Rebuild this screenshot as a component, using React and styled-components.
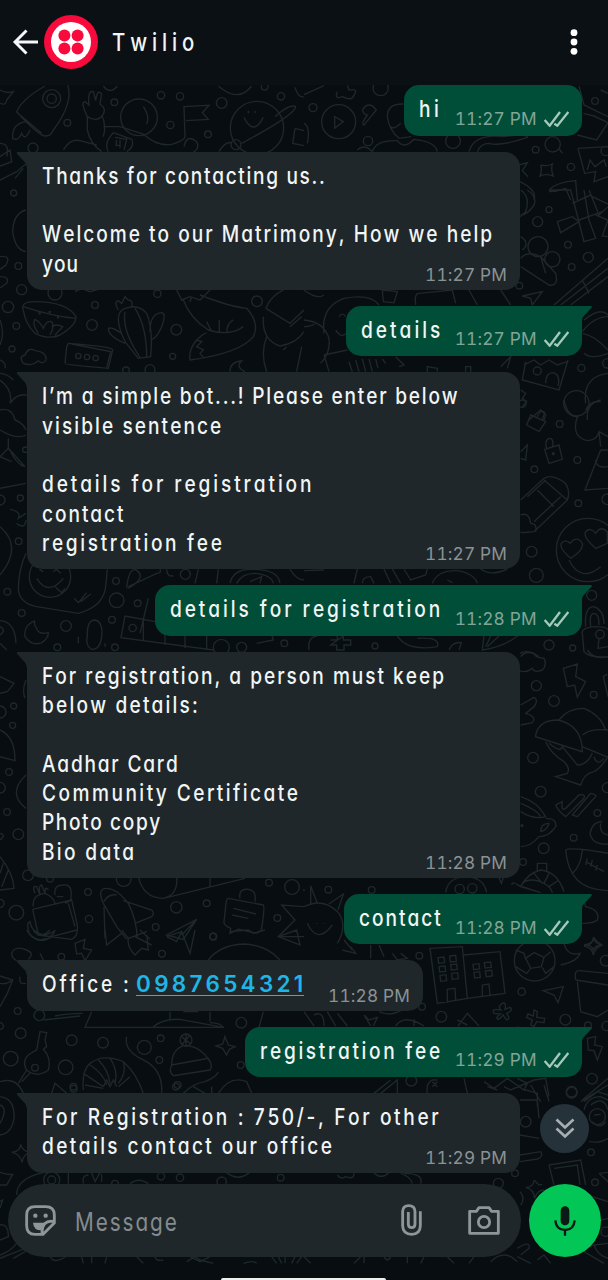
import React from "react";
import styled, { createGlobalStyle, css } from "styled-components";

const GlobalStyle = createGlobalStyle`
  * { box-sizing: border-box; }
  body {
    margin: 0;
    background: #070d10;
    color: #f1f5f5;
    font-family: Inter, "Liberation Sans", sans-serif;
  }
`;

const Screen = styled.main`
  position: relative;
  display: flex;
  flex-direction: column;
  width: 608px;
  height: 1280px;
  overflow: hidden;
  background: #070d10;
`;

const Header = styled.header`
  position: relative;
  display: flex;
  align-items: center;
  flex: none;
  height: 85px;
  padding: 0 30px 1px 12px;
  background: #0a1014;
`;

const BackIcon = styled.svg`
  width: 27px;
  height: 26px;
`;

const Avatar = styled.svg`
  width: 54px;
  height: 54px;
  margin-left: 5px;
`;

const Title = styled.h1`
  flex: 1;
  margin: 0 0 0 14px;
  font-size: 24.5px;
  line-height: 30px;
  font-weight: 450;
  letter-spacing: 5.9px;
  white-space: pre;
  font-feature-settings: "cv11" 1;
  font-kerning: none;
  transform: scaleX(0.83);
  transform-origin: left;
`;

const MenuIcon = styled.svg`
  flex: none;
  width: 8px;
  height: 28px;
  margin-right: 0.5px;
`;

const Wallpaper = styled.svg`
  position: absolute;
  left: 0;
  top: 0;
  width: 608px;
  height: 1264px;
`;

const Conversation = styled.section`
  position: relative;
  display: flex;
  flex-direction: column;
  flex: none;
  gap: 16.05px;
  height: 1088px;
  padding: 0.2px 26.3px 0 26.5px;
`;

const Bubble = styled.article`
  position: relative;
  display: grid;
  grid-template-columns: minmax(0, 1fr);
  flex: none;
  width: ${(p) => p.$width}px;
  padding: 10px 13px 11px 15px;
  border-radius: 15px;
  ${(p) =>
    p.$out
      ? css`
          align-self: flex-end;
          background: #014e38;
          ${p.$tail && "border-top-right-radius: 0;"}
        `
      : css`
          align-self: flex-start;
          background: #1f272a;
          border-top-left-radius: 0;
        `}
`;

const Tail = styled.svg`
  position: absolute;
  top: 0;
  width: 11.5px;
  height: 15px;
  fill: ${(p) => (p.$out ? "#014e38" : "#1f272a")};
  ${(p) => (p.$out ? "right: -10.5px;" : "left: -10.5px; transform: scaleX(-1);")}
`;

const Body = styled.div`
  grid-area: 1 / 1;
`;

const TextRow = styled.div`
  display: flex;
  height: 29.33px;
`;

const Line = styled.span`
  display: block;
  width: ${(p) => (p.$width ? `${p.$width}px` : "auto")};
  font-size: 23px;
  font-weight: 500;
  line-height: 29.33px;
  letter-spacing: ${(p) => p.$tracking}px;
  white-space: pre;
  font-feature-settings: "cv11" 1;
  font-kerning: none;
  transform: scaleX(0.83);
  transform-origin: left;
`;

const PhoneLink = styled.a`
  color: #1fb5e6;
  font-size: 22.5px;
  font-weight: 600;
  line-height: 27px;
  letter-spacing: 3.3px;
  width: 168px;
  height: 26px;
  border-bottom: 1.5px solid #1fb5e6;
  text-decoration: none;
  white-space: nowrap;
`;

const Meta = styled.div`
  grid-area: 1 / 1;
  place-self: end;
  display: flex;
  align-items: center;
  gap: 7px;
  height: 20px;
  margin-bottom: ${(p) => (p.$out ? -4.2 : -5.8)}px;
  color: ${(p) => (p.$out ? "#83a598" : "#8b9294")};
`;

const Time = styled.time`
  font-size: 17.3px;
  line-height: 20px;
  letter-spacing: 0.15px;
  white-space: nowrap;
  font-feature-settings: "tnum" 1;
`;

const Ticks = styled.svg`
  width: 25px;
  height: 16px;
`;

const ScrollButton = styled.button`
  position: absolute;
  right: 19px;
  bottom: 20.5px;
  display: grid;
  place-items: center;
  width: 49px;
  height: 49px;
  padding: 0;
  border: 0;
  border-radius: 50%;
  background: #26323a;
`;

const Composer = styled.footer`
  position: relative;
  display: flex;
  gap: 8px;
  flex: none;
  margin-top: 11px;
  padding: 0 7px 0 8px;
`;

const InputBar = styled.div`
  display: flex;
  align-items: center;
  width: 513px;
  height: 72.5px;
  padding: 0 21px 0 17px;
  border-radius: 37px;
  background: #1f272a;
`;

const Placeholder = styled.span`
  flex: 1;
  margin-left: 19px;
  color: #858c8f;
  font-size: 25px;
  line-height: 32px;
  letter-spacing: 2.3px;
  font-feature-settings: "cv11" 1;
  transform: scaleX(0.83) translateY(1.5px);
  transform-origin: left;
`;

const BarIcon = styled.svg`
  flex: none;
  width: ${(p) => p.$w}px;
  height: ${(p) => p.$h}px;
  margin-left: ${(p) => p.$gap || 0}px;
  fill: none;
  stroke: #8f9698;
  stroke-width: 8.5;
`;

const MicButton = styled.button`
  display: grid;
  place-items: center;
  width: 72px;
  height: 73px;
  padding: 0;
  border: 0;
  border-radius: 50%;
  background: #02c655;
`;

const HomeBar = styled.div`
  position: absolute;
  left: 221px;
  bottom: 0;
  width: 165px;
  height: 2px;
  border-radius: 2px 2px 0 0;
  background: #eef0f0;
`;

/* Doodles, in panels drawn at three times the screen size. */
const doodles = [
  {
    at: [0, 0],
    dots: [[155, 296, 27], [155, 296, 14], [202, 368, 10], [99, 444, 15], [343, 307, 10], [483, 286, 11], [540, 289, 11], [511, 375, 11], [624, 403, 10], [665, 309, 16], [794, 260, 10], [843, 289, 11], [417, 352, 55], [771, 384, 80], [708, 434, 15]],
    d: "M135 258C105 275 65 300 50 335Q90 380 125 405Q150 415 160 390Q205 330 207 285Q207 265 203 255M60 345L125 400M80 365Q35 370 38 415Q55 425 65 400Q75 425 90 390M0 270Q20 282 40 275L20 300Q18 318 0 310M262 350Q240 305 255 305L267 315Q262 270 280 275L287 302Q292 265 305 282L300 312Q325 330 302 352Q285 365 262 350V390Q270 430 305 455M305 345Q320 375 310 410M310 380H360L430 402Q470 440 515 433Q555 420 555 410L552 320L627 316L607 338L625 358L558 362M340 398Q310 430 325 455M340 398L395 418Q405 440 380 455M190 450Q210 415 240 422L290 435M552 440Q560 400 590 425Q600 445 580 457M430 320Q450 350 440 372M825 350Q870 310 887 320Q885 345 725 430M657 455Q675 425 695 428M745 332V340M765 332V340M732 352Q760 410 790 352M655 258Q715 310 755 258M310 258Q330 285 352 258M345 412L380 418L372 450M350 420L348 436H362M360 420V445M885 385L912 392M885 385L878 430L912 437M885 262Q895 295 912 290M0 430Q30 430 20 470",
  },
  {
    at: [304, 0],
    dots: [[104, 365, 51], [27, 323, 12], [230, 264, 23], [447, 423, 22], [746, 433, 23], [695, 449, 10], [801, 501, 11], [873, 303, 10], [192, 423, 14], [905, 453, 14]],
    d: "M92 350V384L118 365ZM0 284L60 257M100 275Q90 300 115 290Q145 305 150 285Q165 265 135 270L130 256M175 330Q195 300 217 330L180 375Q170 372 190 345Q180 345 175 330M298 312Q250 310 250 350Q255 390 285 415L322 410M260 380Q270 390 290 370M205 455Q215 420 280 422Q300 450 330 418Q395 425 400 455M160 450Q180 430 205 455M0 370Q20 380 10 430M495 455Q510 400 600 410Q670 400 670 412Q590 440 555 430Q530 430 520 455M825 258L840 315L912 350M838 340L870 348L912 368L878 420L820 405M822 445L912 440M822 445L842 520L875 515L870 545L912 530M850 510L858 480L873 500L900 480L907 500M890 270L912 280M710 495Q730 500 745 492Q740 510 748 528Q725 520 708 528Q715 510 710 495M765 445L775 460M645 495L670 488L655 512L672 530M648 545Q700 570 690 600M735 570Q760 545 815 542L820 600M735 575Q760 575 785 565L800 600",
  },
  {
    at: [0, 150],
    dots: [[41, 129, 9], [55, 348, 10], [65, 419, 15], [24, 471, 17], [49, 528, 10], [36, 597, 9], [285, 465, 10], [276, 525, 16], [472, 431, 11], [529, 539, 16], [518, 619, 9], [771, 454, 16], [378, 661, 10], [450, 659, 15], [119, 490, 2], [149, 486, 2], [174, 502, 2], [235, 618, 8], [261, 621, 8], [287, 624, 8], [165, 429, 21]],
    d: "M0 20L30 0L35 35L0 48M0 90L50 65L80 40M45 85L70 55M78 180Q40 190 38 245Q45 300 78 305M0 320Q35 315 18 345L0 358M0 380Q30 380 20 400L0 414M70 480Q60 455 105 455Q200 455 228 500Q230 525 180 555Q145 570 105 550Q75 520 70 480M70 470Q160 500 228 505M115 550Q95 520 105 508Q120 515 130 535Q140 510 155 515Q165 530 150 555M155 530Q170 520 188 530L165 555M205 580Q340 590 338 600L325 655Q195 645 195 640L200 590ZM215 582L332 605L320 652M70 640Q55 620 75 615Q85 590 105 602Q140 605 138 630Q130 645 115 632Q95 650 70 640M415 625L375 575Q335 490 375 475Q415 460 440 490Q460 540 452 620ZM375 485Q365 540 420 622M405 475Q440 530 440 620M355 480Q340 455 355 452L365 460L375 440L385 450Q400 450 395 470M375 580Q325 560 325 535Q335 530 365 550M450 545Q450 490 485 488Q500 490 485 530Q470 565 452 570M550 450Q570 505 625 540Q690 560 730 530M530 420L545 450L570 440L600 450L630 420M570 455L575 440M600 435Q690 470 740 475Q780 520 760 560Q720 610 570 630Q565 600 590 570Q615 545 620 550M590 570L605 575L590 590L610 600L600 610L610 622M620 515L635 545M658 510V545M700 510Q680 520 680 550M850 420Q810 440 798 475L870 520L912 480M870 530L905 500M790 500Q785 570 840 588Q890 580 912 545M800 560Q780 610 800 665M860 590L850 600M905 590L890 665M690 665Q690 635 725 633Q705 650 735 665M225 425L245 415L270 425L305 415M0 510Q15 550 0 585M0 630Q20 640 15 655M0 670Q20 670 40 690",
  },
  {
    at: [304, 190],
    dots: [[735, 59, 9], [701, 95, 15], [702, 170, 30], [745, 208, 23], [853, 202, 15], [803, 231, 10], [792, 164, 10], [646, 287, 10], [832, 534, 11], [700, 543, 12], [910, 520, 14], [817, 640, 38]],
    d: "M650 0Q680 20 665 65L648 80M670 0Q700 20 690 45Q670 75 650 75M735 0L800 0L840 155L875 145L855 90L840 0M805 40L860 15M825 90L895 65M855 0L885 75L912 50M865 20L912 42M760 95L805 80L825 95L770 128ZM875 75L912 90L895 138L912 140M650 140Q680 160 655 180M650 205Q670 180 710 200L755 250Q765 290 735 285L650 230M710 200L725 250M750 345L912 205M770 345L912 235M800 345L912 260M835 270L855 310M655 318L715 305L685 345L680 325ZM495 300L520 345M590 300L620 345M235 300L280 305L270 338L238 335ZM335 345Q330 310 345 310L445 300L455 340M60 430Q50 350 120 325Q200 310 225 345M105 380Q115 365 125 380M95 420Q115 450 130 425M0 390Q60 395 75 445Q80 490 50 520M0 410Q20 410 35 400M60 495L130 480M60 495L75 545M135 515L145 545M155 510L165 545M175 507L185 545M195 507L205 545M215 507L222 535M235 507L245 520M275 500L300 525L285 530M370 545V530L400 535V545M485 545V530H500V545M590 530L620 500L610 535M665 515L655 570L765 600L792 510M725 580Q725 548 748 548Q770 555 762 588M660 525L690 510L710 525L735 510L760 525L790 515M840 390Q890 350 912 375M835 425Q870 380 912 380M835 430Q870 435 912 480M840 490Q860 510 912 490M845 640Q835 560 912 550M850 690Q845 640 890 630M650 600L665 610L655 625L668 635L655 650M675 690L710 660L725 675L720 690M0 300Q40 330 60 315",
  },
  {
    at: [0, 370],
    dots: [[61, 384, 9], [56, 514, 10], [0, 390, 15], [76, 239, 8], [348, 633, 10], [350, 691, 22], [413, 700, 10], [65, 729, 10], [198, 768, 16], [336, 749, 10], [345, 832, 10], [172, 832, 10], [556, 613, 15], [22, 665, 10], [725, 832, 15], [664, 832, 24], [853, 820, 10], [398, 774, 11], [150, 620, 62]],
    d: "M0 30Q40 60 30 100M0 120Q35 110 45 150M30 100Q50 70 80 75M45 150Q70 160 78 180M0 180Q50 210 78 195M25 205V235L0 260M25 235L75 290M30 240Q45 275 70 290M0 260L35 275M0 355L78 340M30 418Q65 425 55 445L78 430M50 460Q75 480 78 450M0 470Q70 530 0 615M78 550Q55 600 55 660Q60 700 110 710L235 730Q315 710 318 640L322 598M118 598L130 605M160 605L170 598L182 610M110 625Q145 680 190 625M165 650L185 668L195 655M222 685L235 698L260 668M242 695L272 672M380 655Q385 600 405 598Q445 620 385 655M385 650L470 610Q485 610 480 598M500 598Q500 620 520 618M595 598L585 640M655 598L650 640M690 640Q700 595 760 598Q835 598 840 640M710 640Q725 610 765 610Q815 615 820 640M750 635L785 620L780 640M445 685L420 790M375 738L465 755M375 738L363 803L640 840M430 750V810M495 790V825M555 795V835M620 795V840M105 752Q70 765 75 800Q95 830 125 818Q145 805 145 788Q115 795 110 775Q100 765 105 752M262 800Q260 750 285 750Q310 755 305 800Q300 840 275 838Q255 825 262 800M235 820V800M315 830V820M0 752Q45 755 48 820M0 770Q20 780 0 795M0 820L20 840M870 598Q890 630 912 630M770 820L820 810L815 790",
  },
  {
    at: [304, 400],
    dots: [[655, 11, 11], [767, 72, 10], [820, 180, 10], [691, 208, 10], [748, 161, 3], [823, 310, 10], [683, 455, 16], [697, 526, 21], [863, 586, 15], [910, 298, 16], [852, 450, 95], [213, 738, 9], [735, 735, 15], [806, 744, 9], [888, 703, 13]],
    d: "M680 45L725 65L705 95L668 75ZM700 50Q710 25 722 38L715 60M722 148L765 135L775 178L735 190ZM728 148Q720 115 740 115Q750 120 745 142M780 0Q790 50 820 50Q800 110 850 122Q880 120 885 95L912 110M845 30Q860 0 890 5M885 95L890 140M890 150L843 270L912 265M890 150H912M875 180Q875 205 912 200M650 300L720 235Q745 220 785 250Q800 275 790 300L690 395Q650 400 650 395M670 290L725 240M690 365L770 290M720 240L790 300M700 270L750 320M650 345Q675 335 680 370Q700 370 695 395M650 155L670 135L665 180L650 175M800 475Q765 445 772 430Q785 415 798 430Q820 405 835 430Q840 450 800 475M875 445Q835 410 845 395Q860 380 875 400Q890 375 910 395V430ZM795 480Q830 550 890 500M150 550L160 507M175 550Q175 530 200 530L210 550M240 507L260 550M265 507L290 550M300 507L320 540L365 525L370 507M385 550Q400 510 460 512Q510 520 520 550M430 540L445 548M530 507Q560 530 610 507M0 512L60 510M15 750Q10 710 40 708M80 720H100V708M118 708V720H140V735H120V750H98V735H80ZM280 708Q310 755 400 740Q410 710 340 715M540 708L535 750Q600 740 640 708M560 708L545 740M585 708L550 740M435 750Q445 725 472 728L465 750M650 770Q670 745 705 770M835 700Q830 685 870 680Q912 680 912 690M835 700L840 755Q860 775 912 770M845 680Q840 620 870 620Q900 630 900 672M860 680Q855 640 870 640Q885 640 885 675M885 715L882 745L912 740",
  },
  {
    at: [0, 640],
    dots: [[41, 198, 9], [38, 256, 9], [0, 216, 18], [27, 396, 10], [0, 443, 16], [21, 516, 10], [55, 583, 16], [84, 706, 16], [49, 818, 22], [150, 716, 10], [264, 756, 10], [267, 837, 11], [371, 717, 22], [529, 802, 17], [620, 790, 10], [467, 861, 10], [807, 728, 10], [876, 741, 22], [832, 834, 10], [640, 890, 10], [0, 790, 12]],
    d: "M0 110L42 130L22 155L0 160M0 270Q45 290 45 362L0 350M78 120Q65 150 75 175M78 405Q20 460 78 505M0 580Q20 585 0 600M0 650Q40 700 42 745L0 750M10 670L0 700M25 690L5 740M98 808L215 780M98 808L115 885L215 898Q235 890 232 855L215 780L195 790M100 800Q95 765 135 760Q160 770 165 790M105 760Q95 735 110 740L120 765Q115 735 125 735L135 760Q135 735 145 750M165 765Q160 735 190 735Q220 730 212 780M170 770H190M205 790L225 860M85 870Q80 845 90 845Q95 880 135 885Q165 875 165 870Q160 895 120 900Q85 890 85 870M310 790Q290 745 320 745Q350 745 385 790Q410 840 412 895M310 790L350 860L380 898M312 785Q325 760 350 765M312 800L315 895M370 782L455 810Q465 820 455 830L405 850M420 870L450 898M590 838L500 885L550 898ZM590 838L545 885M415 710Q430 775 490 775Q535 765 530 710M490 775L735 715M630 712V740M685 775L790 795Q795 800 785 865Q780 882 760 878L715 868L690 880L692 865Q670 855 672 845L678 790Q680 775 685 775M720 775Q715 745 745 748Q770 750 765 785M700 805L768 822M697 825L745 835M912 800L845 795L885 840L835 890L912 890",
  },
  {
    at: [304, 650],
    dots: [[697, 107, 15], [750, 153, 16], [869, 134, 10], [687, 323, 16], [710, 425, 16], [880, 489, 10], [809, 563, 10], [719, 595, 16], [657, 636, 10], [910, 413, 15], [654, 527, 3], [73, 719, 10], [203, 720, 10], [467, 717, 14], [505, 715, 14], [0, 720, 1]],
    d: "M648 10Q665 0 690 10Q690 22 720 25Q730 45 715 60Q690 70 685 55Q665 70 648 62M778 55L820 42L815 80L845 95L820 142L812 105L790 110ZM650 165L690 142Q705 150 690 170L665 190Q700 200 685 218L650 225M695 255Q705 210 760 210Q835 225 835 305L695 260ZM765 210Q790 175 840 175Q890 195 905 240M835 255Q860 235 912 240M835 290L912 322M725 275Q740 310 780 335Q800 355 790 370L755 380L830 405Q840 370 870 365Q890 355 912 320M735 280Q770 310 775 290L820 345Q850 345 865 310M870 320Q880 350 900 325M755 465L775 455Q770 485 785 475L825 435Q845 430 840 445L785 500Q760 480 755 465M860 430Q885 435 870 445L820 500L805 495ZM650 440Q700 455 725 500Q690 510 650 485M650 460Q700 480 710 500M725 505Q760 505 755 530Q735 560 705 560Q680 590 650 590M710 545Q710 520 735 520Q730 540 710 545M895 515Q865 515 858 550Q865 585 912 582M890 520Q885 550 912 555M785 600Q800 590 912 610M785 600Q790 660 820 690Q850 720 912 722M835 600Q830 650 805 670M845 635L900 665M850 625L845 645M865 630L860 650M880 645L875 662M425 728Q430 685 480 680Q540 680 548 728M625 705Q620 690 650 710L700 725M650 710Q670 670 710 660Q760 665 780 725M655 710L710 728M700 665V640H728V665M690 670L715 700M735 670L720 700M765 690L735 710M655 700Q680 680 720 700Q740 710 745 728M585 683L592 700L598 683M835 740L845 770Q890 780 880 810Q870 820 835 820M910 72L898 80L912 140M850 0Q870 30 912 20M870 862Q870 880 840 885Q865 885 868 900Q875 885 895 885Q875 875 870 862M20 765V708L40 760M75 762L118 732L102 780M0 770Q60 740 105 790Q130 830 100 880M38 820V822M60 820V822M10 820Q40 885 85 825M120 870L145 900",
  },
  {
    at: [0, 930],
    dots: [[53, 243, 10], [62, 310, 16], [32, 386, 22], [105, 413, 10], [197, 412, 22], [215, 331, 16], [309, 338, 16], [433, 352, 21], [482, 325, 10], [478, 390, 10], [533, 465, 10], [221, 476, 10], [724, 278, 16], [722, 405, 10], [639, 19, 10], [486, 71, 10], [118, 256, 16], [0, 288, 10], [184, 80, 10], [558, 330, 18]],
    d: "M35 70Q45 45 80 60Q105 70 85 88M35 70Q35 85 50 92M225 40L255 28L250 55L275 60L255 92L245 70L230 72ZM0 138L38 150L22 190L0 230M0 160Q20 165 35 150M60 140Q55 165 78 160M80 0Q110 50 155 20M100 0Q120 30 150 0M155 20L230 0M315 0L320 45L365 10M365 0L385 25L440 5M385 25Q380 50 405 75L425 55L445 60L440 15M405 20L455 45M500 20L545 5M500 20L530 35L545 5L570 70L585 0M690 5L745 0L760 10L795 0M835 20L890 0L900 45L835 20M625 90Q660 45 730 42Q800 45 840 90M130 270L240 258M165 258Q200 250 248 250M275 245L255 292H670Q665 280 630 278M460 290Q490 265 540 268L670 292M510 245V270M630 245V275M550 245H595M790 245L775 300M120 305L140 308L135 330L140 350L130 358Q155 385 145 420Q110 445 80 420Q65 395 85 375Q100 365 110 360ZM90 430L65 455M80 420L55 460M0 455Q50 440 70 490M155 490L165 460L200 490M380 320Q370 360 430 390Q490 420 485 490M250 480Q245 420 270 400Q310 370 370 395Q410 430 430 490M270 405Q310 430 320 465M295 390Q325 420 330 460M330 385Q355 420 345 460M370 395Q380 430 355 460M250 430L310 470M255 465L310 475M310 470L320 450L330 470L340 450L350 470M390 440L355 470M515 405Q515 360 550 347Q600 345 630 395M515 405L625 385Q640 405 630 420L520 437Q505 425 515 405M545 320L572 342M570 315L545 345M558 310V350M675 320L685 345L705 350L688 358L680 375L668 355L648 348L668 342ZM550 490Q580 460 615 455Q650 440 655 425M580 470L615 490M655 490Q690 435 740 455L755 490M635 470V490M120 70L130 90",
  },
  {
    at: [304, 930],
    dots: [[346, 77, 10], [354, 230, 10], [412, 260, 16], [653, 185, 11], [784, 269, 16], [852, 286, 10], [864, 446, 16], [803, 488, 16], [322, 452, 16], [905, 92, 16], [692, 92, 61], [908, 288, 14]],
    d: "M378 55L475 50L490 205L400 220ZM478 75L588 65L603 190L490 205M430 218V178L453 175L455 212M535 200V165L555 162L558 195M402 83L420 81L422 98L404 100ZM437 78L455 76L457 94L439 96ZM405 110L423 108L425 124L407 126ZM440 104L458 102L460 118L442 120ZM408 136L426 134L428 152L410 154ZM443 130L461 128L463 146L445 148ZM507 103L525 101L527 117L509 119ZM541 98L560 96L562 112L543 114ZM510 127L527 125L529 142L512 144ZM544 123L563 121L565 138L547 140ZM665 85L690 68L720 82L712 110L680 115ZM635 60L660 70L665 88M635 110L668 130L680 115M715 112L725 130L750 110M720 82L740 65M780 40Q790 80 828 70Q820 95 770 105M868 22Q868 45 840 48Q865 52 868 75Q873 52 895 45Q873 42 868 22M815 150Q810 120 825 122L912 130M815 150L912 165M820 155L830 245L880 260L912 240M718 182L778 170L762 218L750 195ZM595 220Q580 230 590 240Q560 235 570 250L590 252Q570 265 585 268L598 255Q610 280 615 262L608 250Q630 240 618 232L603 238Q608 215 595 220M690 240L700 245L698 262L722 265L720 278L698 275L690 290L680 285L685 270L668 262L672 252L688 258ZM462 288L490 250L525 288M460 270L490 285M180 255L195 270L220 262L208 288M180 255L200 288M275 288Q300 250 360 288M330 268V288M225 245Q260 260 290 242M0 245L30 288M30 255Q60 240 60 288M70 245L95 288M100 250L130 288M850 325L875 320L872 345L895 350L880 390L870 362L853 360ZM640 290L655 300M370 490Q365 460 385 450H400M385 455L400 470M400 455L385 470M480 445L490 490M210 490L260 450M230 490L280 450V490M540 455L570 475L610 445L660 480L670 460L640 445M550 470L580 480M600 470L620 480L690 450L725 445L735 500M650 475L700 490V530M912 445L835 510M840 540Q850 500 890 500L912 510M140 50L155 70L115 60M265 70L280 90L310 85L290 70M200 45V85M225 45L240 80",
  },
  {
    at: [0, 1085],
    dots: [[155, 285, 24], [155, 285, 12], [483, 274, 11], [540, 278, 11], [842, 278, 10], [345, 296, 10], [665, 290, 14], [528, 5, 10], [220, 5, 10]],
    d: "M0 35Q45 40 42 100Q35 145 0 150M0 60Q25 70 0 115M62 178Q62 200 35 202Q60 206 66 232Q70 206 92 202Q68 200 62 178M50 330Q50 280 130 263M205 263V296M250 296Q245 270 265 270M275 263L285 290L300 263M305 268V290M390 296Q415 275 445 296M680 263Q715 290 748 263M0 262Q20 270 38 268L20 300L0 300M0 350L8 345L0 370M0 420Q25 415 25 455L0 465M0 510Q30 500 50 475M0 520L75 490M40 520L75 500M150 513Q160 540 200 513M245 515L250 535M275 515V535M320 515L315 535M410 515L430 535M465 515Q470 530 490 525M560 530L585 515L600 525L640 535M570 515L600 530L630 515M730 535Q760 525 770 535M815 515L830 535M835 515L845 535M855 515V535M885 515L875 535M905 515L890 535",
  },
  {
    at: [304, 1085],
    dots: [[803, 20, 16], [861, 202, 10], [633, 265, 10], [583, 295, 15], [873, 292, 10], [665, 110, 16], [905, 440, 14], [880, 95, 24]],
    d: "M680 0L710 50M720 0L735 50M912 0L830 50M840 50L880 20L912 30M648 45H700L705 100M648 150L705 160M860 60Q900 30 912 75M870 90L890 88M865 110Q890 135 905 110M855 170Q890 175 912 160M648 210L710 200Q720 215 700 222L648 230M735 240L830 225L845 300M735 240L750 300M750 250L820 240L828 300M690 285Q690 305 665 308Q690 312 692 340Q700 315 720 315M690 285L705 300L715 298M850 330L912 350M885 265L912 262M885 265L912 290M875 410L912 400M100 270Q110 285 125 275Q150 285 150 265M210 263Q230 285 255 263M290 265Q320 275 325 296M350 296Q360 265 300 265M648 320Q665 340 650 360M820 490L870 480Q880 510 912 520M840 500L900 535M870 480L912 475M640 490Q680 465 675 490L650 510M560 530Q600 490 640 530M640 515L680 535M430 515L450 535M510 515L495 535M240 515Q250 535 260 515M150 535L170 515M180 535V515M310 535V515M350 535L360 515M700 525L720 510L740 535M0 515L20 535",
  },
];

const doubleTick = (
  <Ticks viewBox="717 327 75 48" fill="none" stroke="#a6c9bb" strokeWidth="7">
    <path d="M719 354L734 371L765 330M748 365L757 371L790 330" />
  </Ticks>
);

function Message({ width, out, tail = true, time, children }) {
  return (
    <Bubble $width={width} $out={out} $tail={tail}>
      {tail && (
        <Tail $out={out} viewBox="0 0 11.5 15">
          <path d="M0 0H9.8Q11.2 .2 10.8 1.6L2 11Q1 12.5 1 15H0Z" />
        </Tail>
      )}
      <Body>{children}</Body>
      <Meta $out={out}>
        <Time>{time}</Time>
        {out && doubleTick}
      </Meta>
    </Bubble>
  );
}

function Text({ lines }) {
  return lines.map(([text, tracking], i) => (
    <TextRow key={i}>
      <Line $tracking={tracking}>{text}</Line>
    </TextRow>
  ));
}

export default function App() {
  return (
    <Screen>
      <GlobalStyle />
      <Wallpaper viewBox="0 0 608 1264" fill="none" stroke="#1f272a" strokeWidth="4.2">
        {doodles.map(({ at, dots, d }, i) => (
          <g key={i} transform={`translate(${at[0]} ${at[1]}) scale(.33333)`}>
            <path d={d} />
            {dots.map(([cx, cy, r], j) => (
              <circle key={j} cx={cx} cy={cy} r={r} />
            ))}
          </g>
        ))}
      </Wallpaper>

      <Header>
        <BackIcon viewBox="0 0 27 26" fill="none" stroke="#f4f7f7" strokeWidth="2.9">
          <path d="M26 13H2.5M14.5 1.5L3 13L14.5 24.5" />
        </BackIcon>
        <Avatar viewBox="0 0 54 54">
          <circle cx="27" cy="27" r="27" fill="#f90a3c" />
          <circle cx="27" cy="27" r="20" fill="#fff" />
          <g fill="#f90a3c">
            <circle cx="20.4" cy="20.4" r="6" />
            <circle cx="33.6" cy="20.4" r="6" />
            <circle cx="20.4" cy="33.6" r="6" />
            <circle cx="33.6" cy="33.6" r="6" />
          </g>
        </Avatar>
        <Title>Twilio</Title>
        <MenuIcon viewBox="0 0 8 28" fill="#fff">
          <circle cx="4" cy="4.7" r="3.4" />
          <circle cx="4" cy="14" r="3.4" />
          <circle cx="4" cy="23.3" r="3.4" />
        </MenuIcon>
      </Header>

      <Conversation>
        <Message out tail={false} width={178} time="11:27 PM">
          <Text lines={[["hi", 4.2]]} />
        </Message>
        <Message width={493.5} time="11:27 PM">
          <Text
            lines={[
              ["Thanks for contacting us..", 2.02],
              ["", 0],
              ["Welcome to our Matrimony, How we help", 2.43],
              ["you", 1.2],
            ]}
          />
        </Message>
        <Message out width={236} time="11:27 PM">
          <Text lines={[["details", 3.65]]} />
        </Message>
        <Message width={493.5} time="11:27 PM">
          <Text
            lines={[
              ["I’m a simple bot...! Please enter below", 2.17],
              ["visible sentence", 2.5],
              ["", 0],
              ["details for registration", 3.48],
              ["contact", 2.35],
              ["registration fee", 3.18],
            ]}
          />
        </Message>
        <Message out width={426.5} time="11:28 PM">
          <Text lines={[["details for registration", 3.52]]} />
        </Message>
        <Message width={493.5} time="11:28 PM">
          <Text
            lines={[
              ["For registration, a person must keep", 2.39],
              ["below details:", 2.65],
              ["", 0],
              ["Aadhar Card", 2.15],
              ["Community Certificate", 3.0],
              ["Photo copy", 1.95],
              ["Bio data", 2.8],
            ]}
          />
        </Message>
        <Message out width={238} time="11:28 PM">
          <Text lines={[["contact", 2.4]]} />
        </Message>
        <Message width={396.5} time="11:28 PM">
          <TextRow>
            <Line $tracking={3.4} $width={94.5}>
              {"Office :"}
            </Line>
            <PhoneLink>0987654321</PhoneLink>
          </TextRow>
        </Message>
        <Message out width={337} time="11:29 PM">
          <Text lines={[["registration fee", 3.2]]} />
        </Message>
        <Message width={493.5} time="11:29 PM">
          <Text
            lines={[
              ["For Registration : 750/-, For other", 3.18],
              ["details contact our office", 2.9],
            ]}
          />
        </Message>
        <ScrollButton aria-label="Scroll to latest">
          <svg width="20" height="22" viewBox="0 0 20 22" fill="none" stroke="#a7afb3" strokeWidth="2.6">
            <path d="M1.5 2.5L10 10.5L18.5 2.5M1.5 11.5L10 19.5L18.5 11.5" />
          </svg>
        </ScrollButton>
      </Conversation>

      <Composer>
        <InputBar>
          <BarIcon $w={31} $h={31} viewBox="0 0 93 93">
            <path d="M30 5H62Q88 5 88 30V54L54 88H30Q5 88 5 62V30Q5 5 30 5ZM88 50Q50 42 51 88" />
            <path d="M24 53H66L64 58Q50 60 49 76Q26 76 24 53Z" fill="#8f9698" stroke="none" />
            <circle cx="31" cy="32" r="6.5" fill="#8f9698" stroke="none" />
            <circle cx="62" cy="32" r="6.5" fill="#8f9698" stroke="none" />
          </BarIcon>
          <Placeholder>Message</Placeholder>
          <BarIcon $w={21} $h={32} viewBox="0 0 63 96">
            <path d="M58 22V66Q57 91 32 91Q6 91 5 66V22Q6 5 23 5Q41 5 42 22V61Q41 71 32 71Q23 71 22 61V24" />
          </BarIcon>
          <BarIcon $w={32} $h={29} $gap={46} viewBox="0 0 96 87">
            <path d="M5 16H25L33 5H63L71 16H91V82H5Z" strokeLinejoin="round" />
            <circle cx="48" cy="48" r="17" />
          </BarIcon>
        </InputBar>
        <MicButton aria-label="Record voice message">
          <svg width="22" height="30" viewBox="0 0 66 90" fill="none" stroke="#0a1a14" strokeWidth="7">
            <rect x="20" y="1" width="26" height="57" rx="13" fill="#0a1a14" stroke="none" />
            <path d="M4 43Q6 71 33 72Q60 71 62 43M33 72V89" />
          </svg>
        </MicButton>
      </Composer>
      <HomeBar />
    </Screen>
  );
}
